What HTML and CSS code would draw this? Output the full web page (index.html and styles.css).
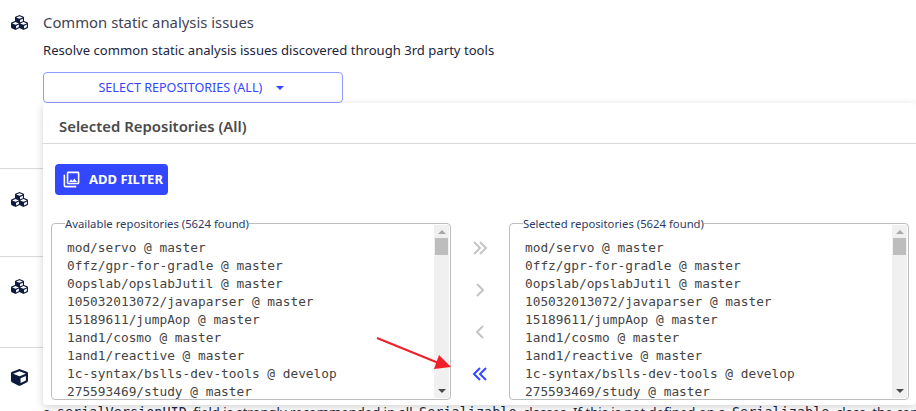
FILE: index.html
```html
<!DOCTYPE html>
<html lang="en">
<head>
  <meta charset="UTF-8">
  <title>Recipes</title>
  <link rel="stylesheet" href="styles.css">
</head>
<body>
  <svg class="icon-defs" width="0" height="0">
    <symbol id="cubes" viewBox="0 0 512 512"><path d="M488.6 250.2L392 214V105.5c0-15-9.3-28.4-23.4-33.7l-100-37.5c-8.1-3.1-17.1-3.1-25.3 0l-100 37.5c-14.1 5.3-23.4 18.7-23.4 33.7V214l-96.6 36.2C9.3 255.5 0 268.9 0 283.9V394c0 13.6 7.7 26.1 19.9 32.2l100 50c10.1 5.1 22.1 5.1 32.2 0l103.9-52 103.9 52c10.1 5.1 22.1 5.1 32.2 0l100-50c12.2-6.1 19.9-18.6 19.9-32.2V283.9c0-15-9.3-28.4-23.4-33.7zM358 214.8l-85 31.9v-68.2l85-37v73.3zM154 104.1l102-38.2 102 38.2v.6l-102 41.4-102-41.4v-.6zm84 291.1l-85 42.5v-79.1l85-38.8v75.4zm0-112l-102 41.4-102-41.4v-.6l102-38.2 102 38.2v.6zm240 112l-85 42.5v-79.1l85-38.8v75.4zm0-112l-102 41.4-102-41.4v-.6l102-38.2 102 38.2v.6z"/></symbol>
    <symbol id="cube" viewBox="0 0 512 512"><path d="M239.1 6.3l-208 78c-18.7 7-31.1 25-31.1 45v225.1c0 18.2 10.3 34.8 26.5 42.9l208 104c13.5 6.8 29.4 6.8 42.9 0l208-104c16.3-8.1 26.5-24.8 26.5-42.9V129.3c0-20-12.4-37.9-31.1-44.9l-208-78C262 2.2 250 2.2 239.1 6.3zM256 68.4l192 72v1.1l-192 78-192-78v-1.1l192-72zm32 356V275.5l160-65v133.9l-160 80z"/></symbol>
  </svg>

  <div class="recipe-list">
    <div class="recipe recipe-first">
      <svg class="recipe-icon"><use href="#cubes"/></svg>
      <div class="recipe-body">
        <div class="recipe-title">Common static analysis issues</div>
        <div class="recipe-desc">Resolve common static analysis issues discovered through 3rd party tools</div>
        <button class="select-btn">SELECT REPOSITORIES (ALL) <span class="caret"></span></button>
      </div>
    </div>
    <div class="recipe recipe-second">
      <svg class="recipe-icon"><use href="#cubes"/></svg>
    </div>
    <div class="recipe recipe-third">
      <svg class="recipe-icon"><use href="#cubes"/></svg>
    </div>
    <div class="recipe recipe-last">
      <svg class="recipe-icon"><use href="#cube"/></svg>
      <div class="recipe-body">
        <p class="recipe-text">a <code>serialVersionUID</code> field is strongly recommended in all <code>Serializable</code> classes. If this is not defined on a <code>Serializable</code> class, the compiler will generate one</p>
      </div>
    </div>
  </div>

  <div class="popover">
    <div class="popover-head">Selected Repositories (All)</div>
    <div class="popover-body">
      <button class="add-filter">
        <svg class="add-filter-icon" viewBox="0 0 24 24"><path d="M20 4v12H8V4h12m0-2H8c-1.1 0-2 .9-2 2v12c0 1.1.9 2 2 2h12c1.1 0 2-.9 2-2V4c0-1.1-.9-2-2-2zm-8.5 9.67l1.69 2.26 2.48-3.1L19 15H9zM2 6v14c0 1.1.9 2 2 2h14v-2H4V6H2z"/></svg>
        ADD FILTER
      </button>
      <div class="transfer">
        <fieldset class="repo-box">
          <legend>Available repositories (5624 found)</legend>
          <div class="repo-list">
            <div>mod/servo @ master</div>
            <div>0ffz/gpr-for-gradle @ master</div>
            <div>0opslab/opslabJutil @ master</div>
            <div>105032013072/javaparser @ master</div>
            <div>15189611/jumpAop @ master</div>
            <div>1and1/cosmo @ master</div>
            <div>1and1/reactive @ master</div>
            <div>1c-syntax/bslls-dev-tools @ develop</div>
            <div>275593469/study @ master</div>
          </div>
          <div class="scrollbar">
            <span class="scroll-up"></span>
            <span class="scroll-thumb"></span>
            <span class="scroll-down"></span>
          </div>
        </fieldset>
        <div class="transfer-btns">
          <svg class="move-icon" viewBox="0 0 16 14"><path d="M2 1l6 6-6 6M8 1l6 6-6 6"/></svg>
          <svg class="move-icon" viewBox="0 0 16 14"><path d="M5 1l6 6-6 6"/></svg>
          <svg class="move-icon" viewBox="0 0 16 14"><path d="M11 1L5 7l6 6"/></svg>
          <svg class="move-icon move-active" viewBox="0 0 16 14"><path d="M8 1L2 7l6 6M14 1L8 7l6 6"/></svg>
        </div>
        <fieldset class="repo-box">
          <legend>Selected repositories (5624 found)</legend>
          <div class="repo-list">
            <div>mod/servo @ master</div>
            <div>0ffz/gpr-for-gradle @ master</div>
            <div>0opslab/opslabJutil @ master</div>
            <div>105032013072/javaparser @ master</div>
            <div>15189611/jumpAop @ master</div>
            <div>1and1/cosmo @ master</div>
            <div>1and1/reactive @ master</div>
            <div>1c-syntax/bslls-dev-tools @ develop</div>
            <div>275593469/study @ master</div>
          </div>
          <div class="scrollbar">
            <span class="scroll-up"></span>
            <span class="scroll-thumb"></span>
            <span class="scroll-down"></span>
          </div>
        </fieldset>
      </div>
    </div>
  </div>

  <svg class="annotation" width="90" height="50" viewBox="0 0 90 50">
    <line x1="2" y1="3" x2="66" y2="29" stroke="#f0202a" stroke-width="2"/>
    <polygon points="76,32 64,20 59,34" fill="#f0202a"/>
  </svg>
</body>
</html>
```

FILE: styles.css
```css
html, body {
  height: 411px;
  overflow: hidden;
}
body {
  position: relative;
  margin: 0;
  background-color: #fff;
  font-family: "Noto Sans", sans-serif;
  color: #1b2540;
}
.icon-defs {
  position: absolute;
}
.recipe {
  display: flex;
  box-sizing: border-box;
  gap: 15px;
  padding-left: 11px;
  border-bottom: 1px solid #d9d9d9;
}
.recipe-first {
  height: 169px;
  padding-top: 12px;
}
.recipe-second {
  height: 88px;
  padding-top: 20px;
}
.recipe-third {
  height: 91px;
  padding-top: 19px;
}
.recipe-last {
  height: 63px;
  padding-top: 19px;
  border-bottom: none;
}
.recipe-icon {
  flex: none;
  width: 17px;
  height: 17px;
  margin-top: 2px;
  fill: #0f1b3d;
}
.recipe-body {
  flex: 1;
  min-width: 0;
  overflow: hidden;
}
.recipe-title {
  font-size: 14.85px;
  line-height: 20px;
  color: #3d4454;
  white-space: nowrap;
}
.recipe-desc {
  margin-top: 9px;
  font-size: 13.1px;
  line-height: 18px;
  color: #1b2540;
  white-space: nowrap;
}
.select-btn {
  display: block;
  width: 300px;
  height: 31px;
  margin-top: 13px;
  padding: 0 4px 0 0;
  background: #fff;
  border: 1px solid #8f9bff;
  border-radius: 4px;
  color: #3347ff;
  font-family: inherit;
  font-size: 12.6px;
}
.caret {
  display: inline-block;
  margin-left: 10px;
  border-top: 4px solid #3347ff;
  border-left: 4px solid transparent;
  border-right: 4px solid transparent;
  vertical-align: 2px;
}
.recipe-text {
  margin: 35px 0 0;
  font-size: 13.1px;
  line-height: 20px;
  color: #1b2540;
  white-space: nowrap;
}
.recipe-text code {
  padding: 0 3px;
  font-family: "DejaVu Sans Mono", monospace;
  font-size: 13.5px;
}

/* repository picker */
.popover {
  position: absolute;
  top: 103px;
  left: 43px;
  width: 873px;
  height: 302px;
  background-color: #fff;
  border-radius: 4px;
  box-shadow: 0 2px 8px rgba(0, 0, 0, 0.18);
}
.popover-head {
  box-sizing: border-box;
  height: 41px;
  padding: 13px 16px 0;
  border-bottom: 1px solid #d9d9d9;
  font-size: 14.9px;
  line-height: 20px;
  font-weight: 600;
  color: #4a4a4a;
}
.popover-body {
  padding: 20px 7px 0 8px;
}
.add-filter {
  display: flex;
  align-items: center;
  gap: 8px;
  width: 113px;
  height: 31px;
  margin-left: 4px;
  padding: 0 0 1px 7px;
  background-color: #3347ff;
  border: none;
  border-radius: 4px;
  color: #fff;
  font-family: inherit;
  font-size: 13px;
  font-weight: 700;
}
.add-filter-icon {
  width: 19px;
  height: 19px;
  fill: #fff;
}
.transfer {
  display: flex;
  margin-top: 22px;
}
.repo-box {
  display: flex;
  box-sizing: border-box;
  width: 400px;
  height: 183px;
  min-width: 0;
  margin: 0;
  padding: 0;
  border: 1px solid #bdbdbd;
  border-radius: 4px;
}
.repo-box legend {
  margin-left: 13px;
  padding: 0;
  font-size: 11.3px;
  line-height: 13px;
  color: #2c3a63;
}
.repo-list {
  flex: 1;
  overflow: hidden;
  padding: 9px 0 0 15px;
  font-family: "DejaVu Sans Mono", monospace;
  font-size: 12.8px;
  line-height: 18px;
  color: #444;
  white-space: nowrap;
}
.scrollbar {
  display: flex;
  flex-direction: column;
  align-items: center;
  flex: none;
  width: 15px;
  margin: -5px 1px 1px 0;
  background-color: #f0f0f0;
}
.scroll-up,
.scroll-down {
  width: 0;
  border-left: 4px solid transparent;
  border-right: 4px solid transparent;
}
.scroll-up {
  margin-top: 5px;
  border-bottom: 4px solid #a8a8a8;
}
.scroll-down {
  margin-top: auto;
  margin-bottom: 5px;
  border-top: 4px solid #4a4a4a;
}
.scroll-thumb {
  width: 13px;
  height: 17px;
  margin-top: 4px;
  background-color: #bdbdbd;
}
.transfer-btns {
  display: flex;
  flex-direction: column;
  align-items: center;
  flex: none;
  gap: 28px;
  width: 58px;
  padding-top: 24px;
}
.move-icon {
  width: 16px;
  height: 14px;
  fill: none;
  stroke: #c4c4c4;
  stroke-width: 2;
}
.move-active {
  stroke: #3347ff;
}
.annotation {
  position: absolute;
  top: 335px;
  left: 375px;
}
```
